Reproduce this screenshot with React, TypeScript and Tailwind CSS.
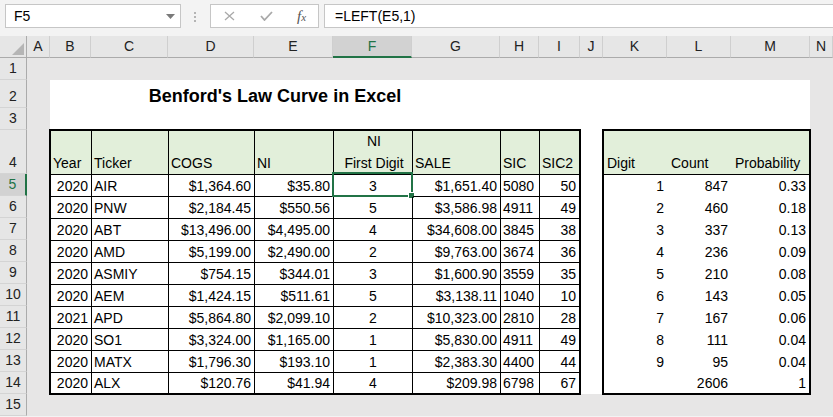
import React from "react";

const letters = ["A", "B", "C", "D", "E", "F", "G", "H", "I", "J", "K", "L", "M", "N"];
const rowStarts = [
  "row-start-2",
  "row-start-3",
  "row-start-4",
  "row-start-5",
  "row-start-6",
  "row-start-7",
  "row-start-8",
  "row-start-9",
  "row-start-10",
  "row-start-11",
  "row-start-12",
  "row-start-13",
  "row-start-14",
  "row-start-15",
  "row-start-16",
];

const rows = [
  ["2020", "AIR", "$1,364.60", "$35.80", "3", "$1,651.40", "5080", "50"],
  ["2020", "PNW", "$2,184.45", "$550.56", "5", "$3,586.98", "4911", "49"],
  ["2020", "ABT", "$13,496.00", "$4,495.00", "4", "$34,608.00", "3845", "38"],
  ["2020", "AMD", "$5,199.00", "$2,490.00", "2", "$9,763.00", "3674", "36"],
  ["2020", "ASMIY", "$754.15", "$344.01", "3", "$1,600.90", "3559", "35"],
  ["2020", "AEM", "$1,424.15", "$511.61", "5", "$3,138.11", "1040", "10"],
  ["2021", "APD", "$5,864.80", "$2,099.10", "2", "$10,323.00", "2810", "28"],
  ["2020", "SO1", "$3,324.00", "$1,165.00", "1", "$5,830.00", "4911", "49"],
  ["2020", "MATX", "$1,796.30", "$193.10", "1", "$2,383.30", "4400", "44"],
  ["2020", "ALX", "$120.76", "$41.94", "4", "$209.98", "6798", "67"],
];

// alignment per column: r = right, l = left, c = center
const align = ["r", "l", "r", "r", "c", "r", "l", "r"];

const digits = [
  ["1", "847", "0.33"],
  ["2", "460", "0.18"],
  ["3", "337", "0.13"],
  ["4", "236", "0.09"],
  ["5", "210", "0.08"],
  ["6", "143", "0.05"],
  ["7", "167", "0.06"],
  ["8", "111", "0.04"],
  ["9", "95", "0.04"],
  ["", "2606", "1"],
];

const FormulaBar = () => (
  <div className="flex h-[36px] items-start pl-[5px] pt-[4px]">
    <div className="flex h-[24px] w-[176px] items-center justify-between border border-[#c6c6c6] bg-white pl-[8px] pr-[5px]">
      <span>F5</span>
      <svg width="9" height="5" viewBox="0 0 9 5">
        <path d="M0 0 L9 0 L4.5 5Z" fill="#7a7a7a" />
      </svg>
    </div>
    <div className="ml-[13px] mt-[8px] flex flex-col gap-[2px]">
      <div className="h-[2px] w-[2px] bg-[#b4b4b4]" />
      <div className="h-[2px] w-[2px] bg-[#b4b4b4]" />
      <div className="h-[2px] w-[2px] bg-[#b4b4b4]" />
    </div>
    <div className="ml-[14px] flex h-[24px] w-[109px] items-center border border-[#c6c6c6] bg-white pl-[13px]">
      <svg width="11" height="10" viewBox="0 0 11 10">
        <path d="M1 1 L10 9 M10 1 L1 9" stroke="#a9a9a9" strokeWidth="1.3" fill="none" />
      </svg>
      <svg className="ml-[25px]" width="13" height="10" viewBox="0 0 13 10">
        <path d="M1 5 L4.5 9 L12 1" stroke="#a9a9a9" strokeWidth="1.8" fill="none" />
      </svg>
      <span className="ml-[24px] font-['Liberation_Serif',serif] text-[15px] italic leading-none text-[#555]">
        f<span className="text-[11px]">x</span>
      </span>
    </div>
    <div className="ml-[5px] flex h-[24px] flex-1 items-center border border-r-0 border-[#c6c6c6] bg-white pl-[10px]">
      =LEFT(E5,1)
    </div>
  </div>
);

const DataTable = () => (
  <div className="col-start-3 col-end-11 row-start-5 row-end-16 m-[-1px] grid grid-cols-[41px_77px_86px_79px_79px_88px_39px_39px] grid-rows-[44px_repeat(9,22px)_20px] border-2 border-black bg-white">
    {["Year", "Ticker", "COGS", "NI", "", "SALE", "SIC", "SIC2"].map((h, ci) => (
      <div
        key={ci}
        className={`flex items-end border-b border-black bg-[#e2efda] pl-[2px] leading-[22px] ${ci < 7 ? "border-r" : ""}`}
      >
        {ci === 4 ? (
          <div className="flex w-full flex-col items-center">
            <span>NI</span>
            <span>First Digit</span>
          </div>
        ) : (
          h
        )}
      </div>
    ))}
    {rows.map((r, ri) =>
      r.map((v, ci) => (
        <div
          key={`${ri}-${ci}`}
          className={`relative flex items-center leading-[22px] border-black ${ci < 7 ? "border-r" : ""} ${ri < 9 ? "border-b" : ""} ${
            align[ci] === "r" ? "justify-end pr-[3px]" : align[ci] === "c" ? "justify-center" : "justify-start pl-[2px]"
          }`}
        >
          {v}
          {ri === 0 && ci === 4 && (
            <div className="absolute bottom-[-1px] left-[-2px] right-[-1px] top-[-3px] border-2 border-[#217346]">
              <div className="absolute bottom-[-4px] right-[-4px] h-[7px] w-[7px] border border-white bg-[#217346]" />
            </div>
          )}
        </div>
      ))
    )}
  </div>
);

const DigitTable = () => (
  <div className="col-start-12 col-end-15 row-start-5 row-end-16 m-[-1px] grid grid-cols-[64px_64px_77px] grid-rows-[44px_repeat(9,22px)_20px] border-2 border-black bg-white">
    {["Digit", "Count", "Probability"].map((h) => (
      <div key={h} className="flex items-end border-b border-black bg-[#e2efda] pl-[3px] leading-[22px]">
        {h}
      </div>
    ))}
    {digits.map((r, ri) =>
      r.map((v, ci) => (
        <div key={`${ri}-${ci}`} className={`flex items-center justify-end leading-[22px] ${ci === 2 ? "pr-[3px]" : "pr-[4px]"}`}>
          {v}
        </div>
      ))
    )}
  </div>
);

export default function App() {
  return (
    <div className="h-[417px] w-[833px] overflow-hidden bg-[#f3f3f3] font-['Liberation_Sans',Arial,sans-serif] text-[14px] text-black">
      <FormulaBar />
      <div className="grid grid-cols-[27px_23px_41px_77px_86px_79px_79px_88px_39px_41px_23px_64px_64px_79px_1fr] grid-rows-[22px_22px_28px_22px_44px_repeat(11,22px)] bg-[#e7e6e6]">
        <div className="row-start-1 flex items-end justify-end border-b border-r border-[#ababab] bg-[#e6e6e6] pb-[2px] pr-[2px]">
          <svg width="12" height="12" viewBox="0 0 12 12">
            <path d="M12 0 L12 12 L0 12Z" fill="#b5b5b5" />
          </svg>
        </div>
        {letters.map((l) => (
          <div
            key={l}
            className={`row-start-1 flex items-center justify-center border-r border-[#cfcfcf] ${
              l === "F" ? "border-b-2 border-b-[#217346] bg-[#d2d2d2] text-[#217346]" : "border-b border-b-[#ababab] bg-[#e6e6e6] text-[#222]"
            }`}
          >
            {l}
          </div>
        ))}
        {rowStarts.map((rs, i) => (
          <div
            key={rs}
            className={`col-start-1 ${rs} flex items-end justify-center border-b border-[#d4d4d4] leading-[22px] ${
              i === 4 ? "border-r-2 border-r-[#217346] bg-[#d2d2d2] text-[#217346]" : "border-r border-r-[#ababab] bg-[#e6e6e6] text-[#222]"
            }`}
          >
            {i + 1}
          </div>
        ))}
        <div className="col-start-3 col-end-15 row-start-3 row-end-16 bg-white" />
        <div className="col-start-3 col-end-9 row-start-3 flex items-end justify-center text-[18px] font-bold leading-[24px]">
          Benford's Law Curve in Excel
        </div>
        <DataTable />
        <DigitTable />
      </div>
    </div>
  );
}
